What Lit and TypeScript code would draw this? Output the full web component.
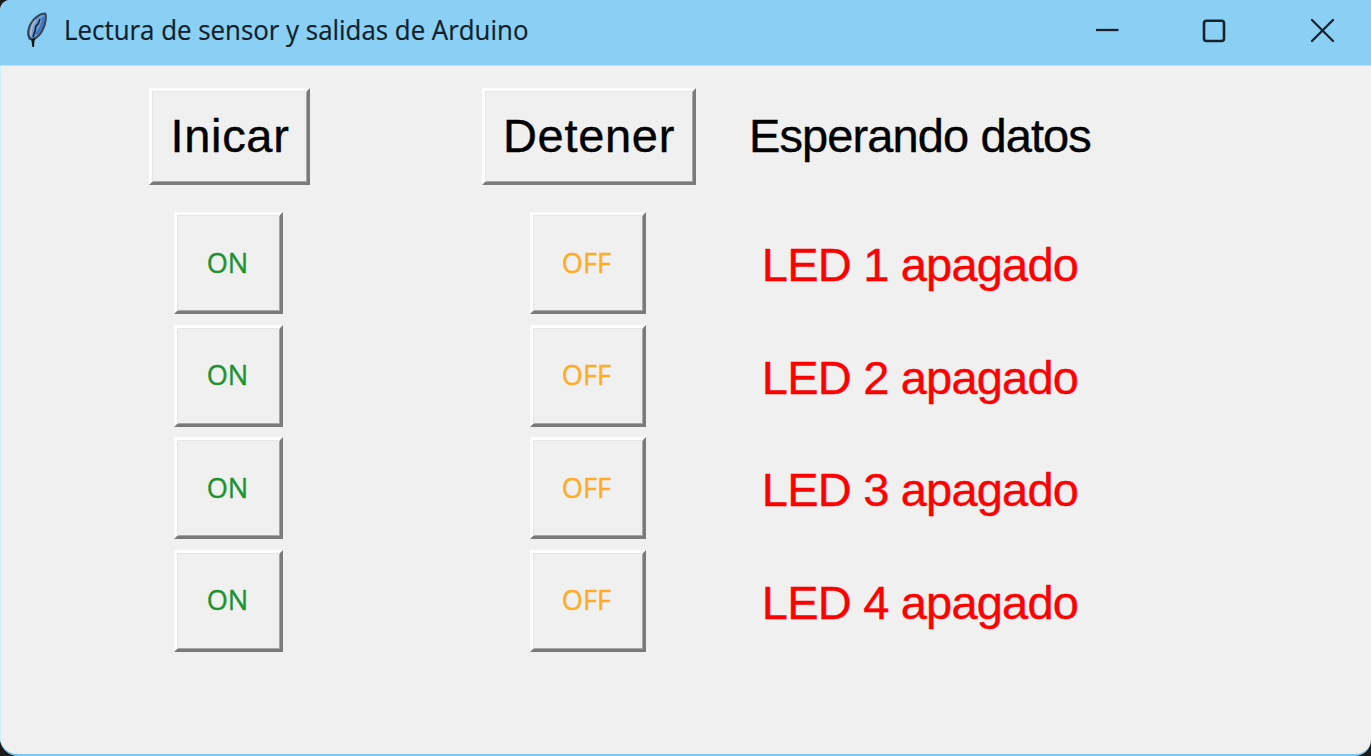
import { LitElement, html, css } from "lit";
import { customElement } from "lit/decorators.js";

@customElement("app-root")
export class AppRoot extends LitElement {
  static styles = css`
    :host {
      display: block;
      width: 1371px;
      height: 756px;
      overflow: hidden;
      background: #1b1b1b;
    }
    .window {
      box-sizing: border-box;
      width: 1371px;
      height: 756px;
      display: flex;
      flex-direction: column;
      overflow: hidden;
      border-radius: 10px 0 16px 18px;
      border-bottom: 2px solid #7cc6ee;
      background: #f0f0f0;
    }
    .titlebar {
      box-sizing: border-box;
      flex: none;
      height: 66px;
      display: flex;
      align-items: center;
      padding: 0 0 5px 24px;
      background: #8ad0f5;
      border-bottom: 1px solid #b9e1f7;
      color: #10202a;
    }
    .feather {
      flex: none;
      width: 26px;
      height: 40px;
    }
    .title {
      flex: 1;
      padding-left: 14px;
      font: 27px/36px "Open Sans", "Noto Sans", sans-serif;
      -webkit-text-stroke: 0.2px;
      white-space: nowrap;
    }
    .title span {
      display: inline-block;
      transform: scaleX(0.958);
      transform-origin: 0 50%;
    }
    .controls {
      flex: none;
      display: flex;
    }
    .controls svg {
      width: 108px;
      height: 60px;
    }
    .client {
      flex: 1;
      display: grid;
      grid-template-columns: 455px 262px 404px;
      grid-template-rows: 141px repeat(4, 112.5px);
      place-items: center;
      border-left: 1px solid #cdeefb;
      font-family: "Liberation Sans", Arial, sans-serif;
      font-size: 47px;
      line-height: 54px;
      color: #000;
      -webkit-text-stroke: 0.4px;
    }
    button {
      box-sizing: border-box;
      display: flex;
      align-items: center;
      justify-content: center;
      margin: 0;
      padding: 0;
      border: 3px solid;
      border-color: #fdfdfd #7a7a7a #7a7a7a #fdfdfd;
      box-shadow: inset 1px 1px #e5e5e5, inset -1px -1px #a6a6a6;
      background: #f0f0f0;
      color: inherit;
      font: inherit;
      white-space: nowrap;
    }
    .start {
      width: 161px;
      height: 97px;
      padding-left: 1px;
      margin-left: 2px;
      letter-spacing: 0.7px;
    }
    .stop {
      width: 214px;
      height: 97px;
      padding-left: 1px;
      margin-left: 3px;
      letter-spacing: 0.7px;
    }
    .start,
    .stop,
    .status {
      margin-bottom: 1px;
    }
    .on,
    .off {
      height: 102px;
      font: 28px/36px "Open Sans", "Noto Sans", sans-serif;
    }
    .on {
      width: 109px;
      color: #1f9230;
    }
    .off {
      width: 116px;
      margin-left: 1px;
      color: #ffab24;
    }
    .on span,
    .off span {
      display: block;
      transform: scaleX(0.97);
      padding: 0 2px 3px 0;
    }
    .status {
      letter-spacing: -0.9px;
      white-space: nowrap;
    }
    .led {
      padding-top: 4px;
      letter-spacing: -0.8px;
      color: #ff0000;
      white-space: nowrap;
    }
  `;

  private leds = [1, 2, 3, 4];

  render() {
    return html`
      <div class="window">
        <header class="titlebar">
          <svg class="feather" viewBox="24 8 26 40">
            <path d="M45 11.5 C46.6 14 45.8 22 42.5 28 C40 33 36 36 33.5 37 L29.5 36.5 C27 32 28 25 32 20 C36 14.500 41 11.500 45 11.500Z" fill="#6c9cd5" stroke="#34465a" stroke-width="2.200"/>
            <path d="M43 15 C44 20 41 27 36 32" fill="none" stroke="#3f73c0" stroke-width="2.600"/>
            <path d="M36 18 C32 22 30.500 28 31 34" fill="none" stroke="#a6b5c6" stroke-width="2"/>
            <path d="M40 17 L38 22 L36 24 L35 29 L33 35" fill="none" stroke="#162440" stroke-width="1.700"/>
            <path d="M28.500 34 L31.500 37.500 L35.500 36 L34.500 39 L34 45 L32.300 45 L31.500 39Z" fill="#10151c"/>
          </svg>
          <div class="title"><span>Lectura de sensor y salidas de Arduino</span></div>
          <div class="controls">
            <svg viewBox="0 0 108 60"><path d="M49 30H71.500" stroke="#14222b" stroke-width="2.300"/></svg>
            <svg viewBox="0 0 108 60"><rect x="49" y="20.700" width="20" height="20.300" rx="2.500" fill="none" stroke="#14222b" stroke-width="2.600"/></svg>
            <svg viewBox="0 0 108 60"><path d="M49 20L70 41M70 20L49 41" stroke="#14222b" stroke-width="2.300" stroke-linecap="round"/></svg>
          </div>
        </header>
        <main class="client">
          <button class="start">Inicar</button>
          <button class="stop">Detener</button>
          <div class="status">Esperando datos</div>
          ${this.leds.map(
            (n) => html`
              <button class="on"><span>ON</span></button>
              <button class="off"><span>OFF</span></button>
              <div class="led">LED ${n} apagado</div>
            `
          )}
        </main>
      </div>
    `;
  }
}
